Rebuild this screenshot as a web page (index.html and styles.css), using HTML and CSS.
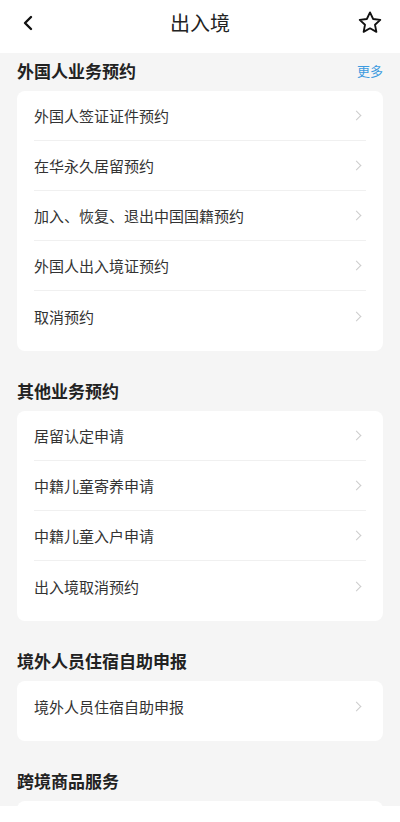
FILE: index.html
```html
<!DOCTYPE html>
<html lang="zh-CN">
<head>
<meta charset="utf-8">
<meta name="viewport" content="width=device-width, initial-scale=1">
<title>出入境</title>
<link rel="stylesheet" href="styles.css">
</head>
<body>
<div class="screen">
  <header class="topbar">
    <span class="back">
      <svg width="12" height="16" viewBox="0 0 12 16"><path d="M9 2 L3 8 L9 14" fill="none" stroke="#111" stroke-width="2.4" stroke-linecap="round" stroke-linejoin="round"/></svg>
    </span>
    <h1 class="title">出入境</h1>
    <span class="star">
      <svg width="26" height="26" viewBox="0 0 24 24"><path d="M12 2.2 L14.9 8.3 L21.5 9.1 L16.6 13.6 L17.9 20.2 L12 16.9 L6.1 20.2 L7.4 13.6 L2.5 9.1 L9.1 8.3 Z" fill="none" stroke="#111" stroke-width="1.7" stroke-linejoin="round"/></svg>
    </span>
  </header>

  <main class="content">
    <section class="section first">
      <div class="section-head">
        <h2 class="section-title">外国人业务预约</h2>
        <span class="more">更多</span>
      </div>
      <ul class="card">
        <li class="row"><span>外国人签证证件预约</span><i class="chev"></i></li>
        <li class="row"><span>在华永久居留预约</span><i class="chev"></i></li>
        <li class="row"><span>加入、恢复、退出中国国籍预约</span><i class="chev"></i></li>
        <li class="row"><span>外国人出入境证预约</span><i class="chev"></i></li>
        <li class="row"><span>取消预约</span><i class="chev"></i></li>
      </ul>
    </section>

    <section class="section">
      <div class="section-head">
        <h2 class="section-title">其他业务预约</h2>
      </div>
      <ul class="card">
        <li class="row"><span>居留认定申请</span><i class="chev"></i></li>
        <li class="row"><span>中籍儿童寄养申请</span><i class="chev"></i></li>
        <li class="row"><span>中籍儿童入户申请</span><i class="chev"></i></li>
        <li class="row"><span>出入境取消预约</span><i class="chev"></i></li>
      </ul>
    </section>

    <section class="section">
      <div class="section-head">
        <h2 class="section-title">境外人员住宿自助申报</h2>
      </div>
      <ul class="card">
        <li class="row"><span>境外人员住宿自助申报</span><i class="chev"></i></li>
      </ul>
    </section>

    <section class="section">
      <div class="section-head">
        <h2 class="section-title">跨境商品服务</h2>
      </div>
      <div class="card card-stub"></div>
    </section>
  </main>
  <div class="bottom-safe"></div>
</div>
</body>
</html>
```

FILE: styles.css
```css
* { box-sizing: border-box; }
html, body {
  margin: 0;
  padding: 0;
  background: #f5f5f5;
}
body {
  font-family: "Noto Sans CJK SC", "Noto Sans", sans-serif;
  color: #333;
  width: 400px;
  height: 822px;
  overflow: hidden;
}
.screen {
  position: relative;
  width: 400px;
  height: 822px;
  overflow: hidden;
  display: flex;
  flex-direction: column;
}
.topbar {
  position: relative;
  height: 53px;
  flex: none;
  background: #fff;
  display: flex;
  align-items: center;
  justify-content: space-between;
  padding: 0 17px 0 22px;
}
.back {
  width: 12px;
  height: 16px;
  display: flex;
  margin-top: -8px;
}
.title {
  margin: 0;
  font-size: 20px;
  font-weight: 400;
  color: #222;
  position: absolute;
  left: 0;
  right: 0;
  top: 8px;
  text-align: center;
  line-height: 30px;
  pointer-events: none;
}
.star {
  width: 26px;
  height: 26px;
  display: flex;
  margin-top: -8px;
}
.content {
  flex: 1;
  overflow: hidden;
  padding: 0 17px;
}
.section-head {
  display: flex;
  align-items: center;
  justify-content: space-between;
  height: 20px;
  margin: 30px 0 10px;
}
.section.first .section-head {
  margin-top: 8px;
}
.section-title {
  margin: 0;
  font-size: 17px;
  font-weight: 700;
  color: #222;
  line-height: 20px;
}
.more {
  font-size: 13px;
  color: #3d9be0;
  line-height: 20px;
}
.card {
  list-style: none;
  margin: 0;
  padding: 0 17px 10px;
  background: #fff;
  border-radius: 8px;
}
.card-stub {
  height: 60px;
}
.row {
  height: 50px;
  display: flex;
  align-items: center;
  justify-content: space-between;
  font-size: 15px;
  color: #333;
  border-bottom: 1px solid #f0f0f0;
}
.row:last-child {
  border-bottom: none;
}
.chev {
  width: 7px;
  height: 7px;
  border-top: 1.5px solid #cccccc;
  border-right: 1.5px solid #cccccc;
  transform: rotate(45deg);
  margin-right: 6px;
}
.bottom-safe {
  position: absolute;
  left: 0;
  right: 0;
  bottom: 0;
  height: 16px;
  background: #fff;
}
```
